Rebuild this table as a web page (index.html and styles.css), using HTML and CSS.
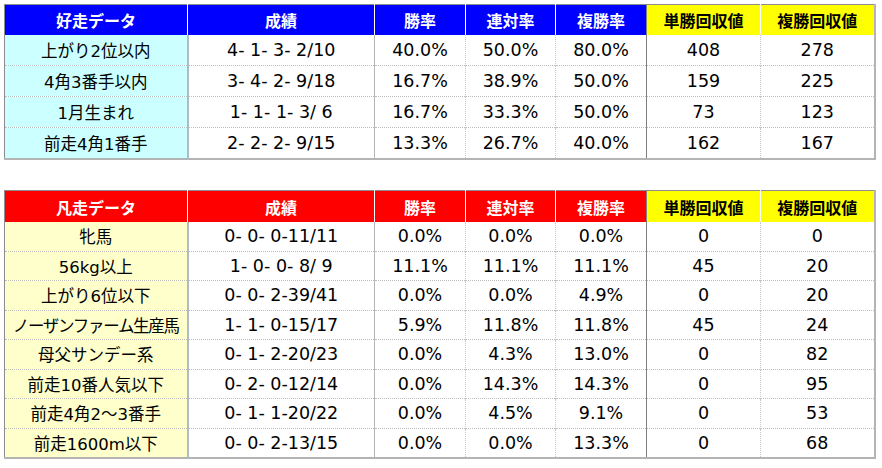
FILE: index.html
```html
<!DOCTYPE html>
<html lang="ja">
<head>
<meta charset="utf-8">
<link rel="stylesheet" href="styles.css">
</head>
<body>
<div class="page">
<table class="stats good">
  <colgroup>
    <col class="c1"><col class="c2"><col class="c3"><col class="c4"><col class="c5"><col class="c6"><col class="c7">
  </colgroup>
  <thead>
    <tr><th class="lbl">好走データ</th><th class="rec">成績</th><th>勝率</th><th>連対率</th><th class="pre">複勝率</th><th class="ret first">単勝回収値</th><th class="ret">複勝回収値</th></tr>
  </thead>
  <tbody>
    <tr><td class="lbl">上がり2位以内</td><td class="rec">4- 1- 3- 2/10</td><td>40.0%</td><td>50.0%</td><td class="pre">80.0%</td><td class="first">408</td><td>278</td></tr>
    <tr><td class="lbl">4角3番手以内</td><td class="rec">3- 4- 2- 9/18</td><td>16.7%</td><td>38.9%</td><td class="pre">50.0%</td><td class="first">159</td><td>225</td></tr>
    <tr><td class="lbl">1月生まれ</td><td class="rec">1- 1- 1- 3/ 6</td><td>16.7%</td><td>33.3%</td><td class="pre">50.0%</td><td class="first">73</td><td>123</td></tr>
    <tr><td class="lbl">前走4角1番手</td><td class="rec">2- 2- 2- 9/15</td><td>13.3%</td><td>26.7%</td><td class="pre">40.0%</td><td class="first">162</td><td>167</td></tr>
  </tbody>
</table>

<table class="stats bad">
  <colgroup>
    <col class="c1"><col class="c2"><col class="c3"><col class="c4"><col class="c5"><col class="c6"><col class="c7">
  </colgroup>
  <thead>
    <tr><th class="lbl">凡走データ</th><th class="rec">成績</th><th>勝率</th><th>連対率</th><th class="pre">複勝率</th><th class="ret first">単勝回収値</th><th class="ret">複勝回収値</th></tr>
  </thead>
  <tbody>
    <tr><td class="lbl">牝馬</td><td class="rec">0- 0- 0-11/11</td><td>0.0%</td><td>0.0%</td><td class="pre">0.0%</td><td class="first">0</td><td>0</td></tr>
    <tr><td class="lbl">56kg以上</td><td class="rec">1- 0- 0- 8/ 9</td><td>11.1%</td><td>11.1%</td><td class="pre">11.1%</td><td class="first">45</td><td>20</td></tr>
    <tr><td class="lbl">上がり6位以下</td><td class="rec">0- 0- 2-39/41</td><td>0.0%</td><td>0.0%</td><td class="pre">4.9%</td><td class="first">0</td><td>20</td></tr>
    <tr><td class="lbl tight">ノーザンファーム生産馬</td><td class="rec">1- 1- 0-15/17</td><td>5.9%</td><td>11.8%</td><td class="pre">11.8%</td><td class="first">45</td><td>24</td></tr>
    <tr><td class="lbl">母父サンデー系</td><td class="rec">0- 1- 2-20/23</td><td>0.0%</td><td>4.3%</td><td class="pre">13.0%</td><td class="first">0</td><td>82</td></tr>
    <tr><td class="lbl">前走10番人気以下</td><td class="rec">0- 2- 0-12/14</td><td>0.0%</td><td>14.3%</td><td class="pre">14.3%</td><td class="first">0</td><td>95</td></tr>
    <tr><td class="lbl">前走4角2～3番手</td><td class="rec">0- 1- 1-20/22</td><td>0.0%</td><td>4.5%</td><td class="pre">9.1%</td><td class="first">0</td><td>53</td></tr>
    <tr><td class="lbl">前走1600m以下</td><td class="rec">0- 0- 2-13/15</td><td>0.0%</td><td>0.0%</td><td class="pre">13.3%</td><td class="first">0</td><td>68</td></tr>
  </tbody>
</table>
</div>
</body>
</html>
```

FILE: styles.css
```css
html, body {
  margin: 0;
  padding: 0;
  background: #ffffff;
}

.page {
  padding: 4px 0 0 4px;
  display: flex;
  flex-direction: column;
  gap: 30px;
  font-family: "DejaVu Sans", "Noto Sans CJK JP", sans-serif;
  color: #000;
}

.stats {
  border-collapse: collapse;
  table-layout: fixed;
  width: 871px;
  border-top: 1px solid #8c8c8c;
  border-left: 1px solid #8c8c8c;
  border-right: 2px solid #b4b4b4;
  border-bottom: 2px solid #b4b4b4;
}

.c1 { width: 183px; }
.c2 { width: 187px; }
.c3 { width: 91px; }
.c4 { width: 90px; }
.c5 { width: 91px; }
.c6 { width: 114px; }
.c7 { width: 114px; }

.stats th,
.stats td {
  padding: 0;
  text-align: center;
  white-space: pre;
  overflow: hidden;
}

.stats th {
  font-size: 16px;
  font-weight: bold;
  color: #ffffff;
  border-left: 1px solid rgba(255, 255, 255, 0.35);
  height: 30px;
}

.stats td {
  font-size: 17.5px;
  border-left: 1px dotted #c8c8c8;
  border-top: 1px dotted #bdbdbd;
}

.stats td.lbl {
  font-size: 16.5px;
}

.stats td.tight {
  letter-spacing: -1.3px;
}

.good th { background: #0000ff; }
.bad th { background: #ff0000; }

.good td { height: 30px; }
.bad td { height: 28.5px; }
.bad th { height: 31px; }

.stats th.ret {
  background: #ffff00;
  color: #000000;
}

.stats .first {
  border-left: 1px solid #7f7f7f;
}

.stats td.rec {
  border-left: 2px solid #b0bcc4;
}

.stats td.lbl {
  border-left: none;
}

.stats th.lbl { border-left: none; }

.good td.lbl { background: #ccffff; }
.bad td.lbl { background: #ffffcc; }

.stats tbody tr:first-child td {
  border-top: none;
}

.stats td:nth-child(3) {
  border-left: 1px solid #b4b4b4;
}
```
